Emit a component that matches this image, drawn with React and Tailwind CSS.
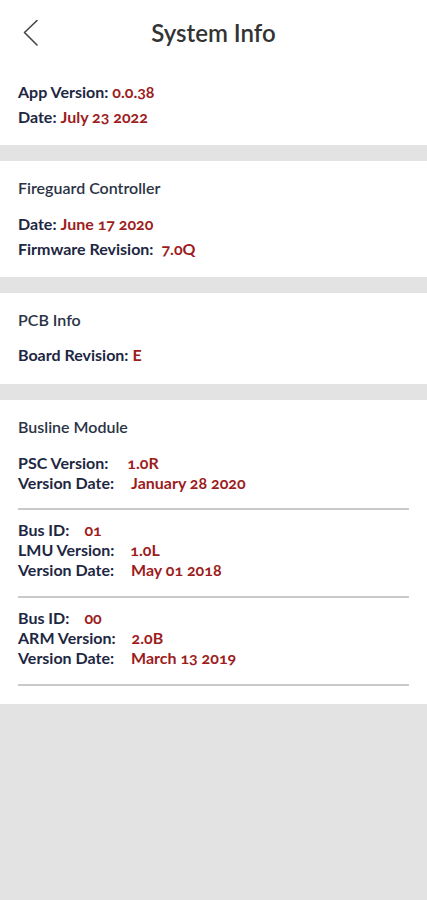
import React from "react";

const font = { fontFamily: "Lato, 'Noto Sans', sans-serif" };

function Row({ label, value, gap = "ml-1" }) {
  return (
    <div className="flex items-center">
      <span className="font-bold text-[#1e2742]">{label}</span>
      <span className={`${gap} font-bold text-[#9c1c20] [font-variant-numeric:oldstyle-nums]`}>{value}</span>
    </div>
  );
}

function BusRow({ label, value, gap }) {
  return (
    <div className="flex items-center h-5">
      <span className="font-bold text-[#1e2742]">{label}</span>
      <span className={`${gap} font-bold text-[#9c1c20] [font-variant-numeric:oldstyle-nums]`}>{value}</span>
    </div>
  );
}

export default function App() {
  return (
    <div className="w-[427px] min-h-[900px] bg-[#e3e3e3]" style={font}>
      {/* Section 1 with header */}
      <div className="bg-white pb-[16px]">
        <div className="relative h-[66px] flex items-center justify-center">
          <svg className="absolute left-[22px] top-[19px]" width="18" height="28" viewBox="0 0 18 28" fill="none">
            <path d="M15 1.5 L2.5 13.5 L15 26" stroke="#444" strokeWidth="1.6" strokeLinecap="round" strokeLinejoin="round" />
          </svg>
          <span className="text-[24px] font-semibold text-[#333333]">System Info</span>
        </div>
        <div className="px-[18px] pt-[13px] text-[16px] leading-[25px]">
          <Row label="App Version:" value="0.0.38" />
          <Row label="Date:" value="July 23 2022" />
        </div>
      </div>

      <div className="h-4" />

      {/* Fireguard Controller */}
      <div className="bg-white px-[18px] pt-[14px] pb-[16px] text-[16px] leading-[25px]">
        <div className="font-semibold text-[#2b3445]">Fireguard Controller</div>
        <div className="mt-[11px]">
          <Row label="Date:" value="June 17 2020" />
          <Row label="Firmware Revision:" value="7.0Q" gap="ml-2" />
        </div>
      </div>

      <div className="h-4" />

      {/* PCB Info */}
      <div className="bg-white px-[18px] pt-[14px] pb-[17px] text-[16px] leading-[25px]">
        <div className="font-semibold text-[#2b3445]">PCB Info</div>
        <div className="mt-[10px]">
          <Row label="Board Revision:" value="E" />
        </div>
      </div>

      <div className="h-4" />

      {/* Busline Module */}
      <div className="bg-white px-[18px] pt-[14px] pb-[18px] text-[16px]">
        <div className="font-semibold text-[#2b3445] leading-[25px]">Busline Module</div>
        <div className="mt-[14px] leading-5">
          <BusRow label="PSC Version:" value="1.0R" gap="ml-[19px]" />
          <BusRow label="Version Date:" value="January 28 2020" gap="ml-[17px]" />
        </div>
        <div className="mt-[15px] h-[2px] bg-[#c9c9c9]" />
        <div className="mt-[10px] leading-5">
          <BusRow label="Bus ID:" value="01" gap="ml-[15px]" />
          <BusRow label="LMU Version:" value="1.0L" gap="ml-[16px]" />
          <BusRow label="Version Date:" value="May 01 2018" gap="ml-[17px]" />
        </div>
        <div className="mt-[16px] h-[2px] bg-[#c9c9c9]" />
        <div className="mt-[10px] leading-5">
          <BusRow label="Bus ID:" value="00" gap="ml-[15px]" />
          <BusRow label="ARM Version:" value="2.0B" gap="ml-[16px]" />
          <BusRow label="Version Date:" value="March 13 2019" gap="ml-[17px]" />
        </div>
        <div className="mt-[16px] h-[2px] bg-[#c9c9c9]" />
      </div>
    </div>
  );
}
